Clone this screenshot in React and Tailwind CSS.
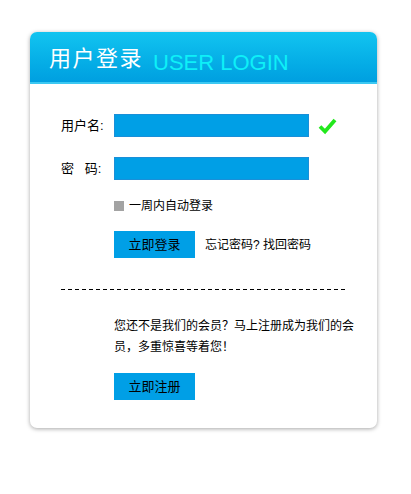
import React from "react";

export default function App() {
  const font = { fontFamily: '"Liberation Sans", "Noto Sans CJK SC", sans-serif' };
  return (
    <div className="w-[411px] h-[494px] bg-white pt-[32px] pl-[30px]" style={font}>
      <div className="w-[347px] h-[396px] rounded-[7px] bg-white shadow-[0_1px_4px_rgba(0,0,0,0.35)] overflow-hidden">
        <div className="h-[52px] bg-gradient-to-b from-[#12c4f0] to-[#009fe0] border-b-2 border-[#3cc8f2] flex items-end pl-[19px] pb-[10px]">
          <span className="text-white text-[22px] leading-[26px] tracking-[1.5px]">用户登录</span>
          <span className="ml-[10px] text-[#0ef0f8] text-[22px] leading-[24px] relative top-[3px]" style={{ fontFamily: '"Liberation Sans", sans-serif' }}>USER LOGIN</span>
        </div>
        <div className="pl-[31px] pt-[30px] text-black text-[12px]">
          <div className="flex items-center h-[23px]">
            <span className="w-[53px] text-[13px]">用户名:</span>
            <div className="w-[195px] h-[23px] bg-[#009fe6] border border-[#1a8fd8]"></div>
            <svg className="ml-[9px]" width="19" height="18" viewBox="0 0 19 18">
              <path d="M2 9.5 L7 14.5 L17 3" stroke="#22e81c" strokeWidth="3.8" fill="none" strokeLinejoin="miter" />
            </svg>
          </div>
          <div className="flex items-center h-[23px] mt-[20px]">
            <span className="w-[53px] text-[13px]">密&nbsp;&nbsp;&nbsp;码:</span>
            <div className="w-[195px] h-[23px] bg-[#009fe6] border border-[#1a8fd8]"></div>
          </div>
          <div className="flex items-center ml-[53px] mt-[20px] h-[12px]">
            <div className="w-[10px] h-[10px] bg-[#a3a3a3]"></div>
            <span className="ml-[5px]">一周内自动登录</span>
          </div>
          <div className="flex items-center ml-[53px] mt-[19px]">
            <div className="w-[81px] h-[27px] bg-[#009fe6] flex items-center justify-center text-[13px]">立即登录</div>
            <span className="ml-[10px]">忘记密码? 找回密码</span>
          </div>
          <div className="w-[286px] h-px mt-[31px] bg-[repeating-linear-gradient(90deg,#000_0px,#000_4px,transparent_4px,transparent_7px)]"></div>
          <p className="ml-[53px] mt-[26px] w-[241px] leading-[21px]">您还不是我们的会员？马上注册成为我们的会员，多重惊喜等着您！</p>
          <div className="ml-[53px] mt-[15px] w-[81px] h-[27px] bg-[#009fe6] flex items-center justify-center text-[13px]">立即注册</div>
        </div>
      </div>
    </div>
  );
}
